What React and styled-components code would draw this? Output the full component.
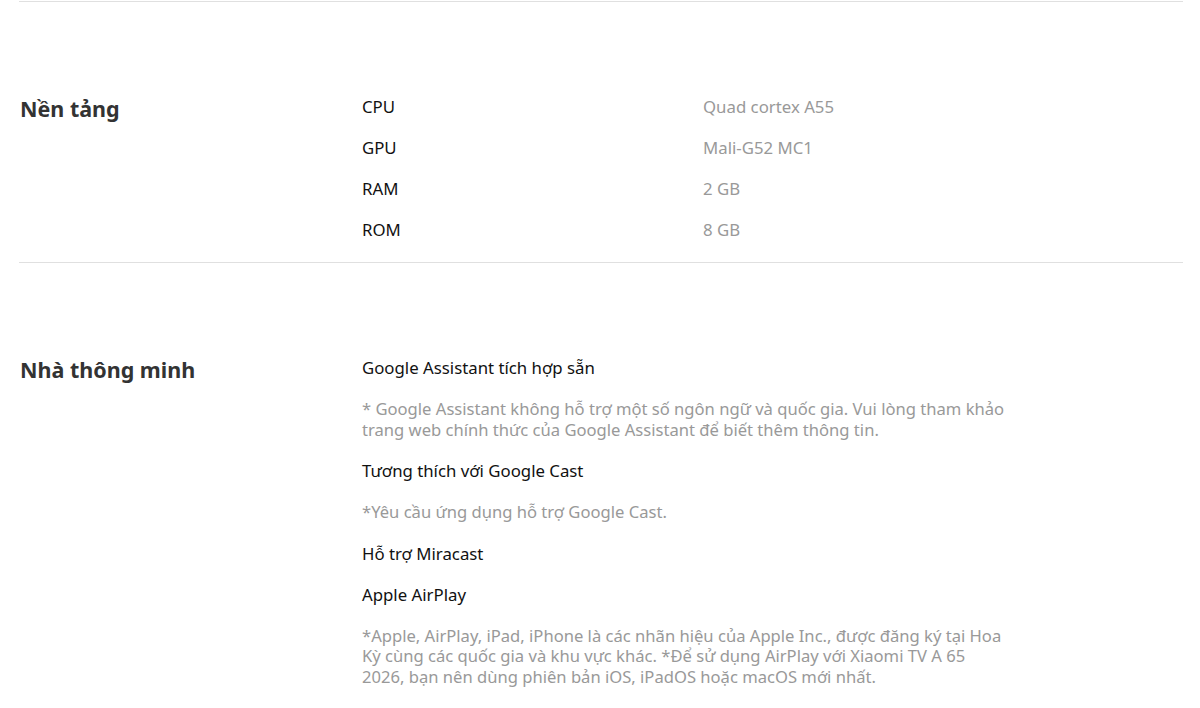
import styled, { createGlobalStyle } from 'styled-components'

const GlobalStyle = createGlobalStyle`
  body {
    margin: 0;
    background: #fff;
    font-family: "Noto Sans", "Open Sans", sans-serif;
    -webkit-font-smoothing: antialiased;
  }
`

const Page = styled.main`
  padding: 0 17px 0 19px;
`

const Section = styled.section`
  display: grid;
  grid-template-columns: 343px 1fr;
  border-top: 1px solid #e0e0e0;
  margin-top: ${p => p.$first ? '1px' : '0'};
  padding: 93px 0 ${p => p.$pad || '20px'};
`

const Title = styled.h2`
  margin: 0;
  padding-left: 1px;
  font-size: 21.5px;
  font-weight: 700;
  line-height: 28px;
  color: #333;
`

const SpecList = styled.div`
  display: flex;
  flex-direction: column;
  gap: 17px;
`

const SpecRow = styled.div`
  display: grid;
  grid-template-columns: 341px 1fr;
  font-size: 16.8px;
  line-height: 24px;
`

const Label = styled.span`
  color: #111;
`

const Value = styled.span`
  color: #999;
`

const Feature = styled.p`
  margin: 0;
  font-size: 16.8px;
  line-height: 24px;
  color: #111;
`

const Note = styled.p`
  margin: 0;
  padding: 2px 0;
  max-width: 646px;
  font-size: 16.6px;
  line-height: 20.5px;
  color: #999;
`

const platform = [
  ['CPU', 'Quad cortex A55'],
  ['GPU', 'Mali-G52 MC1'],
  ['RAM', '2 GB'],
  ['ROM', '8 GB'],
]

export default function App() {
  return (
    <Page>
      <GlobalStyle />
      <Section $first>
        <Title>Nền tảng</Title>
        <SpecList>
          {platform.map(([k, v]) => (
            <SpecRow key={k}>
              <Label>{k}</Label>
              <Value>{v}</Value>
            </SpecRow>
          ))}
        </SpecList>
      </Section>
      <Section $pad="40px">
        <Title>Nhà thông minh</Title>
        <SpecList>
          <Feature>Google Assistant tích hợp sẵn</Feature>
          <Note>* Google Assistant không hỗ trợ một số ngôn ngữ và quốc gia. Vui lòng tham khảo trang web chính thức của Google Assistant để biết thêm thông tin.</Note>
          <Feature>Tương thích với Google Cast</Feature>
          <Note>*Yêu cầu ứng dụng hỗ trợ Google Cast.</Note>
          <Feature>Hỗ trợ Miracast</Feature>
          <Feature>Apple AirPlay</Feature>
          <Note>*Apple, AirPlay, iPad, iPhone là các nhãn hiệu của Apple Inc., được đăng ký tại Hoa Kỳ cùng các quốc gia và khu vực khác. *Để sử dụng AirPlay với Xiaomi TV A 65 2026, bạn nên dùng phiên bản iOS, iPadOS hoặc macOS mới nhất.</Note>
        </SpecList>
      </Section>
    </Page>
  )
}
